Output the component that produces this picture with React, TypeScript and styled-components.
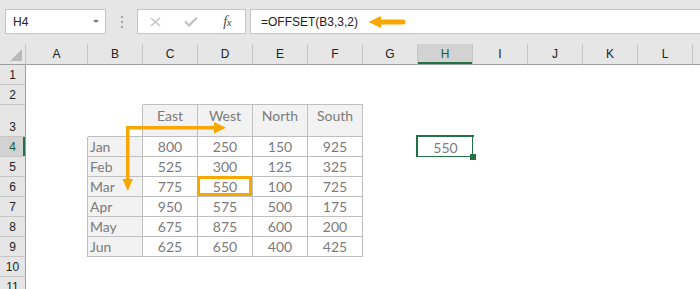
import React from 'react';
import styled, { createGlobalStyle } from 'styled-components';

const GlobalStyle = createGlobalStyle`
  html, body {
    margin: 0;
    padding: 0;
    background: #ffffff;
  }
  body {
    font-family: "Liberation Sans", Arial, sans-serif;
  }
`;

const Page = styled.div`
  width: 700px;
  height: 289px;
  overflow: hidden;
  background: #ffffff;
`;

const FormulaBar = styled.div`
  height: 44px;
  box-sizing: border-box;
  padding: 9px 0 0 5px;
  display: flex;
  align-items: flex-start;
  background: #e6e6e6;
  font-size: 12px;
  color: #222;
`;

const NameBox = styled.div`
  width: 101px;
  height: 25px;
  box-sizing: border-box;
  display: flex;
  align-items: center;
  justify-content: space-between;
  padding: 0 6px 0 7px;
  background: #fff;
  border: 1px solid #c6c6c6;
`;

const DropArrow = styled.span`
  width: 0;
  height: 0;
  border-left: 3px solid transparent;
  border-right: 3px solid transparent;
  border-top: 3px solid #777;
`;

const Grip = styled.div`
  width: 31px;
  height: 25px;
  display: flex;
  flex-direction: column;
  align-items: center;
  justify-content: center;
  gap: 3px;
`;

const GripDot = styled.span`
  width: 2px;
  height: 2px;
  background: #a6a6a6;
`;

const FuncBox = styled.div`
  width: 109px;
  height: 25px;
  box-sizing: border-box;
  display: grid;
  grid-template-columns: repeat(3, 1fr);
  align-items: center;
  justify-items: center;
  background: #fff;
  border: 1px solid #c6c6c6;
`;

const FxText = styled.span`
  font-family: "Liberation Serif", "Times New Roman", serif;
  font-style: italic;
  font-size: 14px;
  color: #4a4a4a;
  letter-spacing: -0.5px;

  & > small {
    font-size: 11px;
  }
`;

const FormulaInput = styled.div`
  flex: 1;
  height: 25px;
  box-sizing: border-box;
  margin: 0 -2px 0 4px;
  padding-left: 10px;
  display: flex;
  align-items: center;
  background: #fff;
  border: 1px solid #c6c6c6;
`;

const PointerArrow = styled.svg`
  margin-left: 10px;
  flex: none;
`;

const SheetWrap = styled.div`
  position: relative;
`;

const Sheet = styled.div`
  display: grid;
  grid-template-columns: 26px 62px repeat(12, 55px);
  grid-template-rows: 21px 20px 20px 32px repeat(8, 20px);
`;

const Corner = styled.div`
  box-sizing: border-box;
  background: #e6e6e6;
  border-right: 1px solid #c6c6c6;
  border-bottom: 1px solid #9e9e9e;
  display: flex;
  align-items: flex-end;
  justify-content: flex-end;
  padding: 0 3px 3px 0;
`;

const ColHead = styled.div<{ $active?: boolean }>`
  box-sizing: border-box;
  display: flex;
  align-items: center;
  justify-content: center;
  font-size: 12px;
  background: ${(p) => (p.$active ? '#d2d2d2' : '#e6e6e6')};
  color: ${(p) => (p.$active ? '#1d5e3a' : '#222')};
  border-right: 1px solid #c6c6c6;
  border-bottom: 1px solid #9e9e9e;
  box-shadow: ${(p) => (p.$active ? 'inset 0 -2px 0 #217346' : 'none')};
`;

const RowHead = styled.div<{ $active?: boolean; $tall?: boolean }>`
  box-sizing: border-box;
  display: flex;
  align-items: ${(p) => (p.$tall ? 'flex-end' : 'center')};
  justify-content: center;
  padding-bottom: ${(p) => (p.$tall ? '2px' : '0')};
  font-size: 12px;
  background: ${(p) => (p.$active ? '#d2d2d2' : '#e6e6e6')};
  color: ${(p) => (p.$active ? '#1d5e3a' : '#222')};
  border-right: 1px solid #9e9e9e;
  border-bottom: 1px solid #c6c6c6;
  box-shadow: ${(p) => (p.$active ? 'inset -2px 0 0 #217346' : 'none')};
`;

const Cell = styled.div<{
  $r?: boolean;
  $b?: boolean;
  $fill?: boolean;
  $left?: boolean;
  $top?: boolean;
  $mark?: boolean;
  $selected?: boolean;
}>`
  position: relative;
  box-sizing: border-box;
  display: flex;
  align-items: ${(p) => (p.$top ? 'flex-start' : 'center')};
  justify-content: ${(p) => (p.$left ? 'flex-start' : 'center')};
  padding: ${(p) => (p.$top ? '2px 0 0' : p.$left ? '0 0 0 2px' : '0')};
  font-family: Lato, "Open Sans", sans-serif;
  font-size: 14px;
  color: #7b7b7b;
  background: ${(p) => (p.$fill ? '#f2f2f2' : '#fff')};
  border-right: ${(p) => (p.$r ? '1px solid #bfbfbf' : 'none')};
  border-bottom: ${(p) => (p.$b ? '1px solid #bfbfbf' : 'none')};

  ${(p) =>
    p.$mark &&
    `
    &::after {
      content: '';
      position: absolute;
      top: -1px;
      left: -1px;
      right: 0;
      bottom: 0;
      border: 3px solid #f7a800;
    }
  `}

  ${(p) =>
    p.$selected &&
    `
    &::after {
      content: '';
      position: absolute;
      top: -2px;
      left: -2px;
      right: -1px;
      bottom: -1px;
      border: 2px solid #217346;
    }
  `}
`;

const FillHandle = styled.span`
  position: absolute;
  right: -3px;
  bottom: -3px;
  width: 6px;
  height: 6px;
  background: #217346;
  z-index: 1;
`;

const Overlay = styled.svg`
  position: absolute;
  left: 0;
  top: 0;
  pointer-events: none;
`;

const cols = ['A', 'B', 'C', 'D', 'E', 'F', 'G', 'H', 'I', 'J', 'K', 'L', 'M'];
const regions = ['East', 'West', 'North', 'South'];
const months: [string, number, number, number, number][] = [
  ['Jan', 800, 250, 150, 925],
  ['Feb', 525, 300, 125, 325],
  ['Mar', 775, 550, 100, 725],
  ['Apr', 950, 575, 500, 175],
  ['May', 675, 875, 600, 200],
  ['Jun', 625, 650, 400, 425],
];

const renderCell = (row: number, c: number) => {
  const key = `${cols[c]}${row}`;
  const inData = c >= 2 && c <= 5;

  if (row === 2 && inData) return <Cell key={key} $b />;
  if (row === 3 && c === 1) return <Cell key={key} $r $b />;
  if (row === 3 && inData)
    return (
      <Cell key={key} $r $b $fill $top>
        {regions[c - 2]}
      </Cell>
    );
  if (row >= 4 && row <= 9) {
    const m = months[row - 4];
    if (c === 0) return <Cell key={key} $r />;
    if (c === 1)
      return (
        <Cell key={key} $r $b $fill $left>
          {m[0]}
        </Cell>
      );
    if (inData)
      return (
        <Cell key={key} $r $b $mark={row === 6 && c === 3}>
          {m[c - 1]}
        </Cell>
      );
  }
  if (row === 4 && c === 7)
    return (
      <Cell key={key} $selected>
        550
        <FillHandle />
      </Cell>
    );
  return <Cell key={key} />;
};

const rows = Array.from({ length: 11 }, (_, i) => i + 1);

const App: React.FC = () => {
  return (
    <Page>
      <GlobalStyle />
      <FormulaBar>
        <NameBox>
          <span>H4</span>
          <DropArrow />
        </NameBox>
        <Grip>
          <GripDot />
          <GripDot />
          <GripDot />
        </Grip>
        <FuncBox>
          <svg width="11" height="10" viewBox="0 0 11 10">
            <path d="M1 1 L10 9 M10 1 L1 9" stroke="#c4c4c4" strokeWidth="1.5" fill="none" />
          </svg>
          <svg width="14" height="11" viewBox="0 0 14 11">
            <path d="M1 5.5 L5 9.5 L13 1.5" stroke="#c4c4c4" strokeWidth="2.4" fill="none" />
          </svg>
          <FxText>
            f<small>x</small>
          </FxText>
        </FuncBox>
        <FormulaInput>
          <span>=OFFSET(B3,3,2)</span>
          <PointerArrow width="40" height="14" viewBox="0 0 40 14">
            <polygon points="0.5,7 13,1 13,13" fill="#f7a800" />
            <path d="M12 7 H35" stroke="#f7a800" strokeWidth="5" strokeLinecap="round" />
          </PointerArrow>
        </FormulaInput>
      </FormulaBar>

      <SheetWrap>
        <Sheet>
          <Corner>
            <svg width="12" height="12" viewBox="0 0 12 12">
              <polygon points="12,0 12,12 0,12" fill="#b8b8b8" />
            </svg>
          </Corner>
          {cols.map((c) => (
            <ColHead key={c} $active={c === 'H'}>
              {c}
            </ColHead>
          ))}
          {rows.map((r) => (
            <React.Fragment key={r}>
              <RowHead $active={r === 4} $tall={r === 3}>
                {r}
              </RowHead>
              {cols.map((_, ci) => renderCell(r, ci))}
            </React.Fragment>
          ))}
        </Sheet>
        <Overlay width="700" height="245" viewBox="0 44 700 245">
          <path d="M215 127.75 H127.75 V180" stroke="#f7a800" strokeWidth="3.5" fill="none" />
          <polygon points="214,122 226,127.75 214,133.5" fill="#f7a800" />
          <polygon points="122.5,179 133,179 127.75,191" fill="#f7a800" />
        </Overlay>
      </SheetWrap>
    </Page>
  );
};

export default App;
